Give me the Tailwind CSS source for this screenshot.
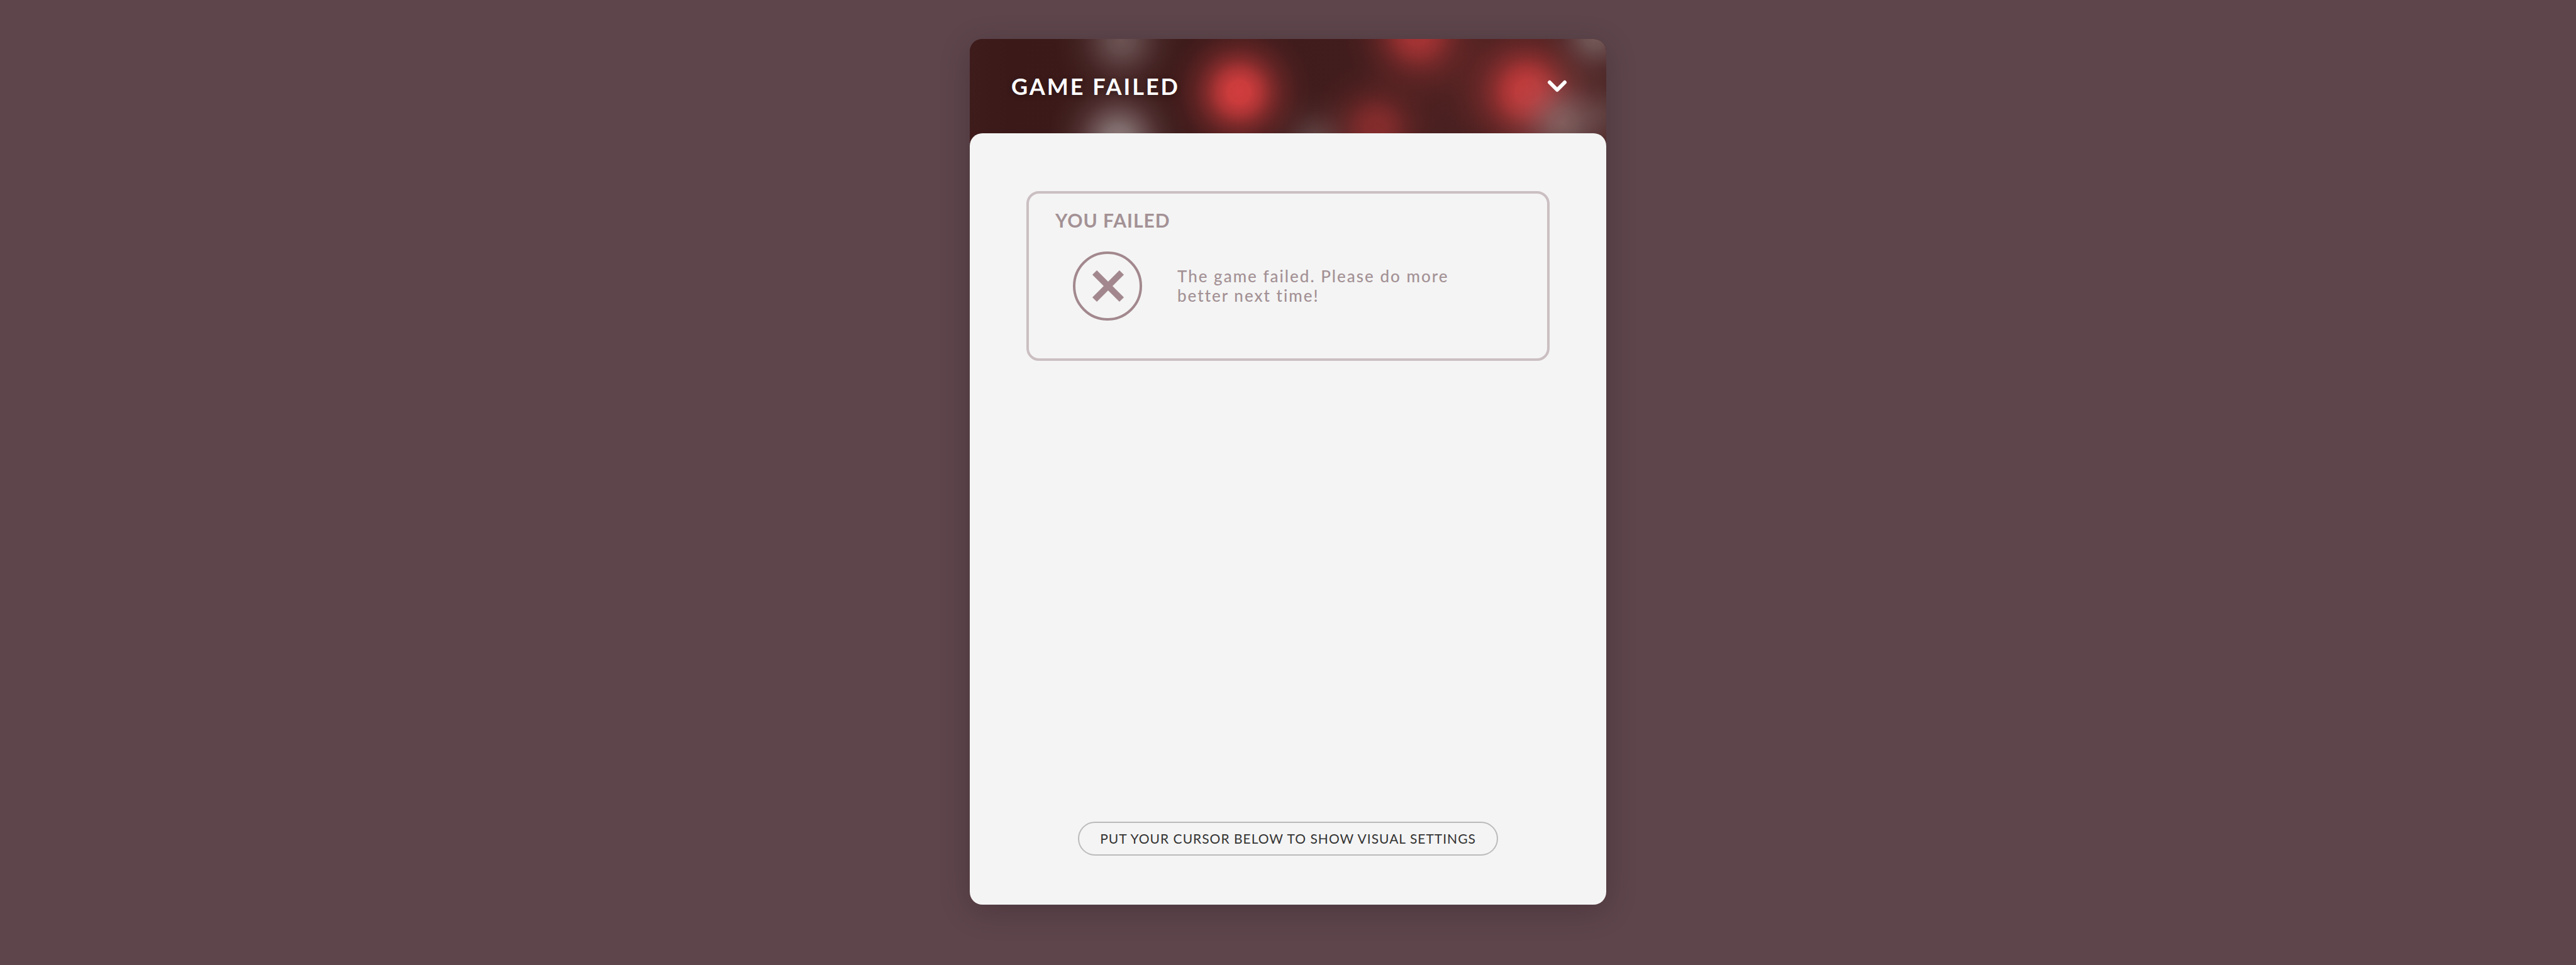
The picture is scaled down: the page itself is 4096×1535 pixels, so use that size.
<!DOCTYPE html>
<html lang="en">
<head>
<meta charset="utf-8">
<meta name="viewport" content="width=device-width, initial-scale=1">
<title>Game failed</title>
<script src="https://cdn.jsdelivr.net/npm/@tailwindcss/browser@4"></script>
</head>
<body class="flex min-h-screen flex-col items-center bg-[#5e454c] pt-[62px] pb-24 font-['Lato',sans-serif]">
<main class="flex w-full max-w-[1012px] grow flex-col rounded-[20px] bg-[#3c1a1a] shadow-[0_10px_50px_rgba(0,0,0,0.2)]">
  <header class="relative -mb-5 overflow-hidden rounded-t-[20px] pb-5">
    <!-- Blurred lights behind the title -->
    <svg class="absolute inset-0 h-full w-full" viewBox="0 0 1012 170" preserveAspectRatio="none" aria-hidden="true">
      <defs>
        <linearGradient id="base"><stop offset="0" stop-color="#3f1c1c"/><stop offset=".06" stop-color="#3b1919"/><stop offset=".25" stop-color="#3c1a1a"/><stop offset=".6" stop-color="#421d1d"/><stop offset="1" stop-color="#4a2222"/></linearGradient>
        <radialGradient id="red"><stop offset="0" stop-color="#d63e3f"/><stop offset=".15" stop-color="#d63e3f" stop-opacity=".95"/><stop offset=".3" stop-color="#d03c3d" stop-opacity=".76"/><stop offset=".45" stop-color="#c83a3b" stop-opacity=".47"/><stop offset=".6" stop-color="#c0393a" stop-opacity=".25"/><stop offset=".8" stop-color="#b03536" stop-opacity=".08"/><stop offset="1" stop-color="#a03030" stop-opacity="0"/></radialGradient>
        <radialGradient id="gray"><stop offset="0" stop-color="#988886"/><stop offset=".2" stop-color="#908080" stop-opacity=".88"/><stop offset=".4" stop-color="#8a7477" stop-opacity=".58"/><stop offset=".6" stop-color="#806468" stop-opacity=".28"/><stop offset=".8" stop-color="#706055" stop-opacity=".1"/><stop offset="1" stop-color="#605045" stop-opacity="0"/></radialGradient>
      </defs>
      <rect width="1012" height="170" fill="url(#base)"/>
      <circle cx="241" cy="2" r="106" fill="url(#gray)" opacity=".52"/>
      <circle cx="236" cy="160" r="112" fill="url(#gray)" opacity=".88"/>
      <circle cx="551" cy="166" r="90" fill="url(#gray)" opacity=".36"/>
      <circle cx="428" cy="84" r="118" fill="url(#red)" opacity=".97"/>
      <circle cx="712" cy="-8" r="118" fill="url(#red)" opacity=".66"/>
      <circle cx="646" cy="142" r="110" fill="url(#red)" opacity=".44"/>
      <circle cx="800" cy="60" r="200" fill="url(#red)" opacity=".08"/>
      <circle cx="887" cy="84" r="126" fill="url(#red)" opacity=".88"/>
      <circle cx="944" cy="134" r="110" fill="url(#gray)" opacity=".56"/>
      <circle cx="1010" cy="120" r="80" fill="url(#gray)" opacity=".2"/>
      <circle cx="994" cy="-4" r="90" fill="url(#gray)" opacity=".55"/>
    </svg>
    <div class="relative flex h-[150px] items-center justify-between pr-[60px] pl-[66px]">
      <h1 class="text-4xl font-bold tracking-[3px] text-white uppercase [text-shadow:0_2px_8px_rgba(0,0,0,0.3)]">Game failed</h1>
      <button type="button" aria-label="Collapse" class="flex size-9 items-center justify-center">
        <svg class="h-5 w-8" viewBox="0 0 32 20" fill="none" stroke="#fff" stroke-width="6" stroke-linecap="round" stroke-linejoin="round" aria-hidden="true"><path d="M4 4l12 12L28 4"/></svg>
      </button>
    </div>
  </header>
  <div class="relative flex grow flex-col items-center justify-between rounded-[20px] bg-[#f4f4f4] px-[90px] pt-[92px] pb-[78px]">
    <section class="flex h-[270px] w-full flex-col rounded-[20px] border-4 border-[#cbbfc2] px-[42px] pt-6">
      <h2 class="text-3xl leading-9 font-bold tracking-[1px] text-[#a39195] uppercase">You failed</h2>
      <div class="mt-8 flex items-center gap-14 pl-7">
        <svg class="size-[110px] shrink-0" viewBox="0 0 110 110" fill="none" stroke="#a2888e" aria-hidden="true"><circle cx="55" cy="55" r="53" stroke-width="4"/><path d="M34.500 33.500l43 43M77.500 33.500l-43 43" stroke-width="10"/></svg>
        <p class="max-w-[450px] text-[26px] leading-[31px] font-medium tracking-[2px] text-[#a39195]">The game failed. Please do more better next time!</p>
      </div>
    </section>
    <button type="button" class="h-[54px] rounded-full border-2 border-[#bbb] px-[33px] text-[21px] tracking-[1px] text-[#333] uppercase">Put your cursor below to show visual settings</button>
  </div>
</main>
</body>
</html>
